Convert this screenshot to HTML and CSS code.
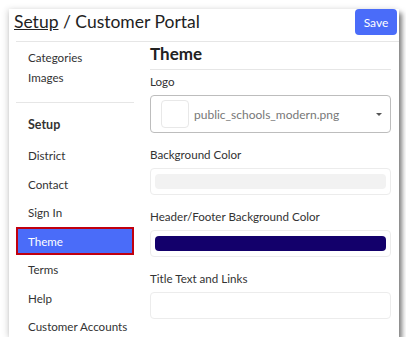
FILE: index.html
```html
<!DOCTYPE html>
<html>
    <head>
        <meta http-equiv="Content-Type" content="text/html; charset=UTF-8">
        <title>Customer Portal</title>
        <link rel="stylesheet" href="styles.css">
    </head>
    <body>
        <div class="card">
            <div class="top-bar">
                <h1 class="page-title"><a href="#">Setup</a> / Customer Portal</h1>
                <button class="save-btn">Save</button>
            </div>
            <div class="layout">
                <div class="sidebar">
                    <div class="side-group">
                        <div class="side-link small">Categories</div>
                        <div class="side-link small">Images</div>
                    </div>
                    <div class="side-head">Setup</div>
                    <div class="side-link">District</div>
                    <div class="side-link">Contact</div>
                    <div class="side-link">Sign In</div>
                    <div class="side-link active">Theme</div>
                    <div class="side-link">Terms</div>
                    <div class="side-link">Help</div>
                    <div class="side-link">Customer Accounts</div>
                </div>
                <div class="content">
                    <h2 class="section-title">Theme</h2>

                    <label class="field-label">Logo</label>
                    <div class="select-box">
                        <div class="thumb"></div>
                        <span class="select-text">public_schools_modern.png</span>
                        <span class="caret"></span>
                    </div>

                    <label class="field-label">Background Color</label>
                    <div class="color-box">
                        <div class="swatch" style="background-color: #f2f2f2;"></div>
                    </div>

                    <label class="field-label">Header/Footer Background Color</label>
                    <div class="color-box">
                        <div class="swatch" style="background-color: #13006b;"></div>
                    </div>

                    <label class="field-label">Title Text and Links</label>
                    <div class="color-box">
                        <div class="swatch"></div>
                    </div>
                </div>
            </div>
        </div>
    </body>
</html>
```

FILE: styles.css
```css
/* Page */
body {
    margin: 0;
    padding: 9px 7px 0 9px;
    background-color: #ffffff;
    font-family: Lato, "Open Sans", Arial, sans-serif;
    color: #333;
}
.card {
    width: 390px;
    height: 328px;
    background-color: #fff;
    overflow: hidden;
    box-shadow: 3px 4px 5px rgba(0, 0, 0, 0.5), -2px 0 6px rgba(0, 0, 0, 0.12);
}

/* Header */
.top-bar {
    display: flex;
    justify-content: space-between;
    align-items: flex-start;
    height: 32px;
    margin-left: 7px;
    border-bottom: 1px solid #e6e6e6;
}
.page-title {
    margin: 0 0 0 -2px;
    font-size: 17.5px;
    font-weight: normal;
    line-height: 25px;
    color: #222;
}
.page-title a {
    color: #222;
    text-decoration: underline;
}
.save-btn {
    width: 42px;
    height: 26px;
    margin-right: 2px;
    border: none;
    border-radius: 4px;
    background-color: #4a6cf9;
    color: white;
    font-family: inherit;
    font-size: 12px;
    padding: 0;
}

/* Columns */
.layout {
    display: grid;
    grid-template-columns: 118px 249px;
    column-gap: 16px;
    margin-left: 7px;
}

/* Sidebar */
.sidebar {
    font-size: 11.6px;
}
.side-group {
    padding: 6px 0 14px;
    border-bottom: 1px solid #e6e6e6;
}
.side-link {
    height: 28.5px;
    line-height: 30px;
    padding-left: 12px;
    box-sizing: border-box;
    white-space: nowrap;
}
.side-link.small {
    height: 20px;
    line-height: 20px;
}
.side-head {
    font-weight: bold;
    font-size: 12.5px;
    padding: 10px 0 0 12px;
    height: 38px;
    line-height: 24px;
    box-sizing: border-box;
}
.side-link.active {
    background-color: #4a6cf9;
    color: white;
    border: 2px solid #c0000f;
    line-height: 26px;
    padding-left: 10px;
}

/* Form */
.content {
    font-size: 11.6px;
    padding-right: 8px;
}
.section-title {
    margin: 0;
    font-size: 17px;
    line-height: 24px;
    padding-bottom: 3px;
    color: #222;
    border-bottom: 1px solid #e6e6e6;
}
.field-label {
    display: block;
    line-height: 16px;
    margin-bottom: 5px;
}
.section-title + .field-label {
    margin-top: 4px;
}
.select-box {
    display: flex;
    align-items: center;
    height: 38px;
    box-sizing: border-box;
    border: 1px solid #bdbdbd;
    border-radius: 4px;
    padding: 0 8px 0 10px;
    margin-bottom: 14px;
}
.thumb {
    width: 28px;
    height: 28px;
    box-sizing: border-box;
    border: 1px solid #e8e8e8;
    border-radius: 4px;
}
.select-text {
    flex: 1;
    margin-left: 5px;
    color: #777;
    font-size: 12px;
}
.caret {
    width: 0;
    height: 0;
    border-left: 3px solid transparent;
    border-right: 3px solid transparent;
    border-top: 3px solid #555;
}
.color-box {
    height: 27px;
    box-sizing: border-box;
    border: 1px solid #ececec;
    border-radius: 4px;
    padding: 5px 4px;
    margin-bottom: 14px;
}
.swatch {
    height: 100%;
    border-radius: 4px;
}
```
